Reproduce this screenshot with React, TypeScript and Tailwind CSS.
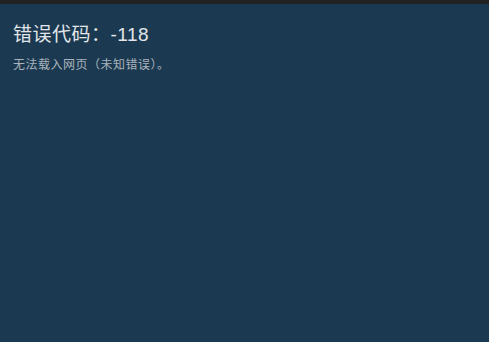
export default function App() {
  return (
    <div
      className="flex h-[342px] w-[489px] flex-col bg-[#1b3950]"
      style={{ fontFamily: '"Liberation Sans", "Noto Sans CJK SC", sans-serif' }}
    >
      <div className="h-[4px] w-full bg-[#222222]" />
      <div className="px-[13px] pt-[18px]">
        <h1 className="text-[19px] leading-[25px] tracking-[0.5px] text-[#e2e6ea]">错误代码：-118</h1>
        <p className="mt-[11px] text-[12px] leading-[15px] tracking-[0.5px] text-[#a9b3bc]">无法载入网页（未知错误）。</p>
      </div>
    </div>
  );
}
